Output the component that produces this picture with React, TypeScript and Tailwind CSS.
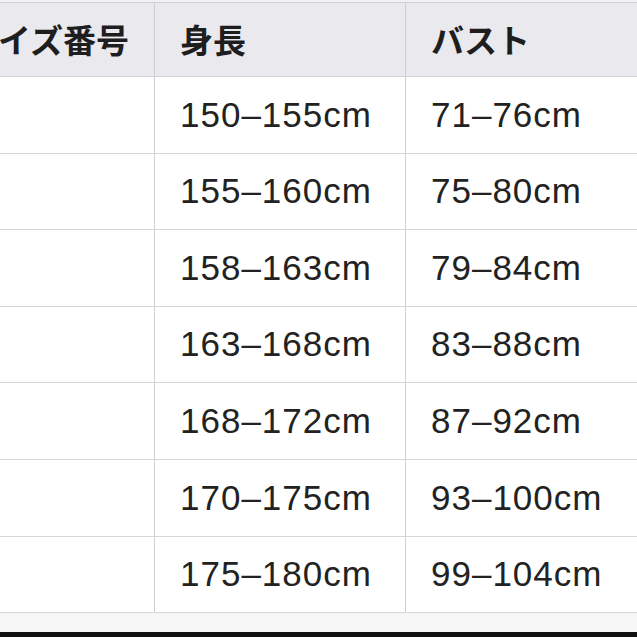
import React from 'react';

const ROWS: [string, string][] = [
    ['150–155cm', '71–76cm'],
    ['155–160cm', '75–80cm'],
    ['158–163cm', '79–84cm'],
    ['163–168cm', '83–88cm'],
    ['168–172cm', '87–92cm'],
    ['170–175cm', '93–100cm'],
    ['175–180cm', '99–104cm'],
];

const jp = { fontFamily: '"Noto Sans CJK JP", "Noto Sans", sans-serif' };
const num = { fontFamily: '"Liberation Sans", Arial, sans-serif' };

export default function App() {
    return (
        <div className="w-[637px] h-[637px] overflow-hidden bg-white flex flex-col">
            <div className="h-[2px] bg-[#f2f2f4]" />
            <div className="ml-[-62px] w-[718px] border-t border-[#cfcfd3]">
                {/* header */}
                <div className="grid grid-cols-[217px_251px_250px] h-[74px] bg-[#e9e9ee] border-b border-[#d2d2d6] text-[#1e1e1e] text-[33px] font-bold" style={jp}>
                    <div className="flex items-center pl-[27px] border-r border-[#cfcfd3]">サイズ番号</div>
                    <div className="flex items-center pl-[25px] border-r border-[#cfcfd3]">身長</div>
                    <div className="flex items-center pl-[25px]">バスト</div>
                </div>
                {/* rows */}
                {ROWS.map(([h, b], i) => (
                    <div key={i} className="grid grid-cols-[217px_251px_250px] h-[76.6px] border-b border-[#d6d6d9] text-[#222] text-[35px] tracking-[1px]" style={num}>
                        <div className="border-r border-[#cfcfd3]" />
                        <div className="flex items-center pl-[25px] border-r border-[#cfcfd3]">{h}</div>
                        <div className="flex items-center pl-[25px]">{b}</div>
                    </div>
                ))}
            </div>
            <div className="flex-1 bg-[#f6f6f7]" />
            <div className="h-[5px] bg-[#111]" />
        </div>
    );
}
